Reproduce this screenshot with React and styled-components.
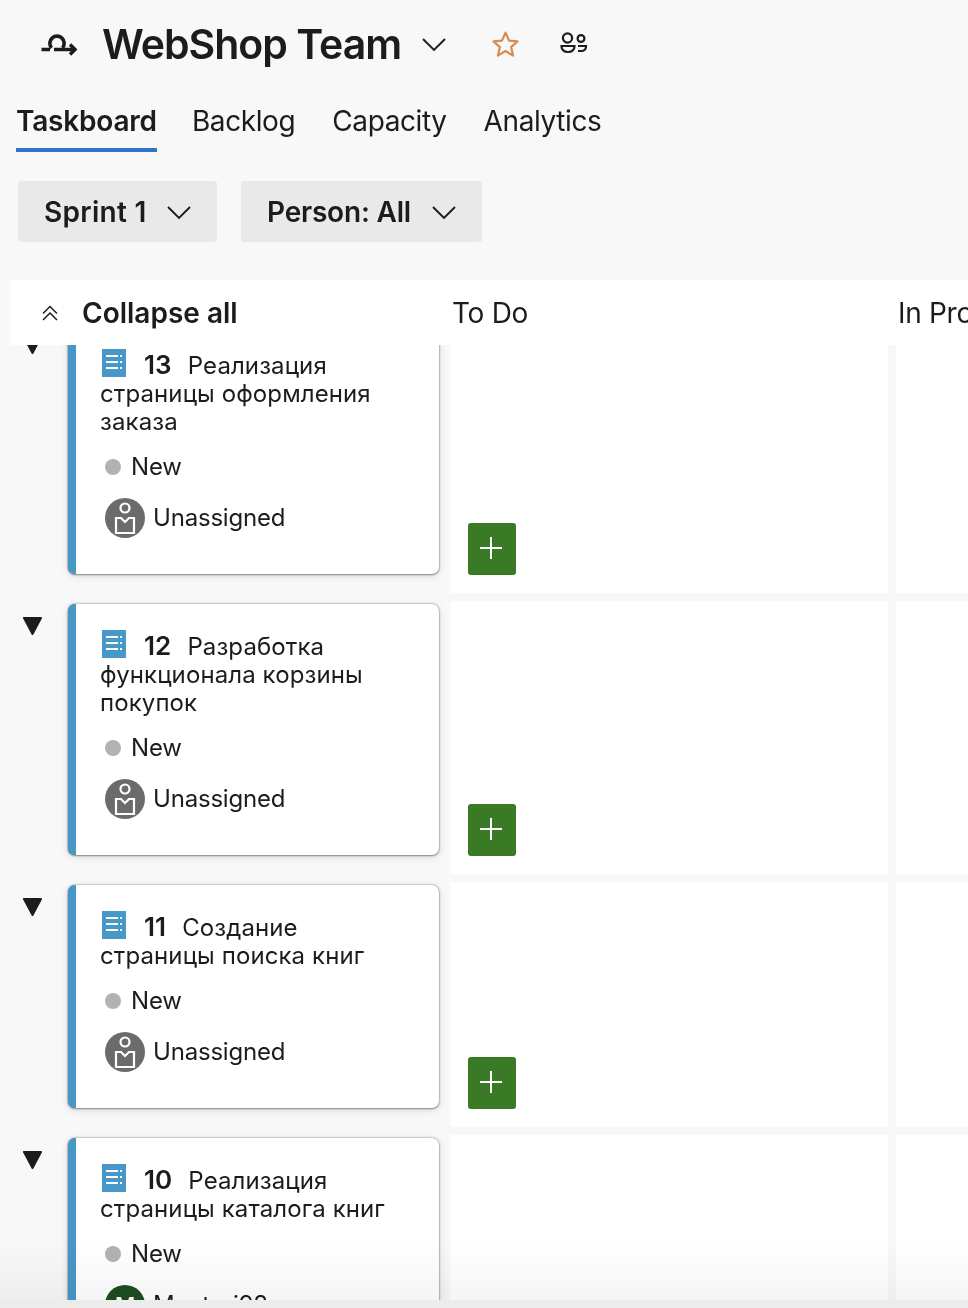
// React
import React from "react";

// Vendor
import styled, { createGlobalStyle } from "styled-components";

const GlobalStyle = createGlobalStyle`
  html,
  body {
    margin: 0;
    padding: 0;
    background: #f8f8f8;
  }

  body {
    font-family: Inter, "Liberation Sans", sans-serif;
    color: #1c1c1c;
    -webkit-font-smoothing: antialiased;
  }
`;

const Page = styled.div`
  width: 968px;
  height: 1308px;
  display: flex;
  flex-direction: column;
  overflow: hidden;
`;

// Title bar
const TitleBar = styled.header`
  height: 88px;
  display: flex;
  align-items: center;
  padding-left: 40px;
  flex: none;
`;

const Title = styled.h1`
  margin: 0 0 0 25px;
  font-size: 41px;
  font-weight: 600;
  letter-spacing: -1px;
  white-space: nowrap;
`;

const TitleChevron = styled.span`
  display: flex;
  margin-left: 20px;
`;

const StarButton = styled.span`
  display: flex;
  margin-left: 44px;
`;

const PeopleButton = styled.span`
  display: flex;
  margin-left: 40px;
`;

// Tabs
const Tabs = styled.nav`
  display: flex;
  gap: 37px;
  padding-left: 16px;
  flex: none;
`;

const Tab = styled.div`
  height: 64px;
  box-sizing: border-box;
  margin-right: ${(p) => (p.$active ? "-2px" : "0")};
  padding-top: 13px;
  font-size: 28px;
  line-height: 40px;
  letter-spacing: ${(p) => (p.$active ? "-0.2px" : "-0.4px")};
  font-weight: ${(p) => (p.$active ? 600 : 400)};
  border-bottom: 4px solid ${(p) => (p.$active ? "#3274c9" : "transparent")};
`;

// Filters
const Filters = styled.div`
  display: flex;
  gap: 24px;
  padding: 29px 0 0 18px;
  flex: none;
`;

const Filter = styled.div`
  width: ${(p) => p.$width}px;
  height: 61px;
  box-sizing: border-box;
  display: flex;
  align-items: center;
  justify-content: space-between;
  padding: 0 25px 0 26px;
  border-radius: 3px;
  background: #e9e9e9;
  font-size: 28px;
  font-weight: 600;
  letter-spacing: ${(p) => p.$tracking}px;
`;

// Board
const Board = styled.section`
  margin: 38px 0 0 10px;
  flex: 1;
  min-height: 0;
  display: flex;
  flex-direction: column;
`;

const BoardHead = styled.div`
  height: 65px;
  flex: none;
  display: grid;
  grid-template-columns: 442px 446px 1fr;
  align-items: center;
  background: #fff;
  font-size: 28px;
  letter-spacing: -0.3px;
  white-space: nowrap;
  overflow: hidden;
`;

const CollapseAll = styled.div`
  display: flex;
  align-items: center;
  gap: 23px;
  padding-left: 31px;
  font-weight: 600;
  letter-spacing: 0;
`;

const Scroller = styled.div`
  position: relative;
  height: 955px;
  flex: none;
  overflow: hidden;
  margin-left: -10px;
`;

// The list is scrolled by 25px, so the first row sits partly under the head
const Rows = styled.div`
  margin-top: -25px;
  display: flex;
  flex-direction: column;
  gap: 8px;
`;

const Row = styled.div`
  display: grid;
  grid-template-columns: 450px 438px 1fr;
`;

const RowHeadCell = styled.div`
  display: flex;
  align-items: flex-start;
  padding: 3px 11px 19px 22px;
`;

const Toggle = styled.span`
  display: flex;
  margin: 12px 25px 0 0;
`;

const Card = styled.article`
  flex: 1;
  min-width: 0;
  box-sizing: border-box;
  padding: 26px 16px 36px 24px;
  background: #fff;
  border-left: 8px solid #4797c9;
  border-radius: 7px;
  box-shadow: 0 0 2px rgba(0, 0, 0, 0.5), 0 1px 2px rgba(0, 0, 0, 0.3), 0 2px 8px rgba(0, 0, 0, 0.12);
`;

const CardTitle = styled.div`
  font-size: 24px;
  line-height: 28px;
  letter-spacing: 0.1px;
`;

const TypeIcon = styled.svg`
  display: inline-block;
  vertical-align: -3px;
  margin: 0 18px 0 2px;
`;

const CardId = styled.b`
  font-size: 26px;
  font-weight: 600;
  margin-right: 16px;
`;

const CardState = styled.div`
  display: flex;
  align-items: center;
  gap: 10px;
  margin: 16px 0 0 5px;
  font-size: 24px;
  line-height: 30px;
  letter-spacing: -0.2px;
`;

const StateDot = styled.span`
  width: 16px;
  height: 16px;
  margin-top: -1px;
  border-radius: 50%;
  background: #b2b2b2;
`;

const CardOwner = styled.div`
  display: flex;
  align-items: center;
  gap: 8px;
  margin: 16px 0 0 5px;
  font-size: 24px;
  line-height: 40px;
  letter-spacing: -0.2px;
`;

const Avatar = styled.span`
  width: 40px;
  height: 40px;
  flex: none;
  display: flex;
  align-items: center;
  justify-content: center;
  border-radius: 50%;
  background: ${(p) => p.$color};
  color: #fff;
  font-size: 22px;
  font-weight: 600;
`;

const Cell = styled.div`
  background: #fff;
  display: flex;
  align-items: flex-end;
  padding: 0 0 18px 18px;
`;

const NextCell = styled.div`
  background: #fff;
  margin-left: 8px;
`;

const AddButton = styled.span`
  width: 48px;
  height: 52px;
  display: flex;
  align-items: center;
  justify-content: center;
  border-radius: 3px;
  background: #3a7a27;
`;

const BottomFade = styled.div`
  position: absolute;
  left: 0;
  right: 0;
  bottom: 0;
  height: 60px;
  background: linear-gradient(#ffffff, #f5f5f5);
  mix-blend-mode: multiply;
  pointer-events: none;
`;

const BottomStrip = styled.div`
  height: 8px;
  flex: none;
  margin-left: -10px;
  background: #ececec;
`;

// Icons
const Chevron = () => (
  <svg width="26" height="26" viewBox="0 0 26 26" fill="none" stroke="#1c1c1c" strokeWidth="1.9">
    <path d="M2 8 13 19 24 8" />
  </svg>
);

const SprintIcon = () => (
  <svg width="37" height="24" viewBox="0 0 37 24" fill="none" stroke="#1c1c1c" strokeWidth="3.6">
    <path d="M11.500 16A7.200 7.200 0 1 1 22.500 16" />
    <path d="M1.500 17.500H10M14 17.500H34" />
    <path d="M30 12.500 35 17.500 30 22.500" strokeWidth="3.400" />
  </svg>
);

const StarIcon = () => (
  <svg width="29" height="29" viewBox="0 0 28 28" fill="none" stroke="#d78b50" strokeWidth="2.100" strokeLinejoin="round">
    <path d="M14 2.500 17.400 10.300 25.600 11 19.400 16.500 21.300 24.700 14 20.300 6.700 24.700 8.600 16.500 2.400 11 10.600 10.300Z" />
  </svg>
);

const PeopleIcon = () => (
  <svg width="28" height="24" viewBox="0 0 28 24" fill="none" stroke="#1c1c1c" strokeWidth="2.200">
    <circle cx="7.500" cy="6" r="4.600" />
    <path d="M1.500 14H14.500V14.500A6 5.500 0 0 1 8.500 20H7.500A6 5.500 0 0 1 1.500 14.500Z" />
    <circle cx="21" cy="6.500" r="3.400" />
    <path d="M18 14H26V14.500A4.500 4.500 0 0 1 21.500 19H18" />
  </svg>
);

const CollapseIcon = () => (
  <svg width="18" height="18" viewBox="0 0 18 18" fill="none" stroke="#1c1c1c" strokeWidth="1.500">
    <path d="M2 9.500 9 2.500 16 9.500M2 16 9 9 16 16" />
  </svg>
);

const ToggleIcon = () => (
  <svg width="21" height="19" viewBox="0 0 21 19" fill="#1c1c1c" stroke="#1c1c1c" strokeWidth="2" strokeLinejoin="round">
    <path d="M2 2H19L10.500 18Z" />
  </svg>
);

const StoryIcon = () => (
  <TypeIcon width="24" height="28" viewBox="0 0 24 28">
    <rect width="24" height="28" fill="#4797c9" />
    <path d="M4 7H16M4 13H16M4 19H16M18 7H20M18 13H20M18 19H20" stroke="#fff" strokeWidth="1.800" />
  </TypeIcon>
);

const UnassignedIcon = () => (
  <svg width="24" height="34" viewBox="0 0 24 34" fill="none" stroke="#fff" strokeWidth="2.200">
    <circle cx="12" cy="7" r="4.500" />
    <path d="M3 17H8L12 21 16 17H21V32H3Z" />
  </svg>
);

const PlusIcon = () => (
  <svg width="24" height="24" viewBox="0 0 24 24" stroke="#fff" strokeWidth="2">
    <path d="M0 11H22M11 0V22" />
  </svg>
);

const items = [
  { id: 13, lines: ["Реализация", "страницы оформления", "заказа"] },
  { id: 12, lines: ["Разработка", "функционала корзины", "покупок"] },
  { id: 11, lines: ["Создание", "страницы поиска книг"] },
  { id: 10, lines: ["Реализация", "страницы каталога книг"], owner: "Mentori98", color: "#1e4d20" },
];

const BoardRow = ({ item }) => {
  const [first, ...rest] = item.lines;
  return (
    <Row>
      <RowHeadCell>
        <Toggle>
          <ToggleIcon />
        </Toggle>
        <Card>
          <CardTitle>
            <StoryIcon />
            <CardId>{item.id}</CardId>
            {first}
            {rest.map((line) => (
              <div key={line}>{line}</div>
            ))}
          </CardTitle>
          <CardState>
            <StateDot />
            New
          </CardState>
          <CardOwner>
            {item.owner ? (
              <Avatar $color={item.color}>M</Avatar>
            ) : (
              <Avatar $color="#6b6b6b">
                <UnassignedIcon />
              </Avatar>
            )}
            {item.owner || "Unassigned"}
          </CardOwner>
        </Card>
      </RowHeadCell>
      <Cell>
        <AddButton>
          <PlusIcon />
        </AddButton>
      </Cell>
      <NextCell />
    </Row>
  );
};

export default function App() {
  return (
    <Page>
      <GlobalStyle />
      <TitleBar>
        <SprintIcon />
        <Title>WebShop Team</Title>
        <TitleChevron>
          <Chevron />
        </TitleChevron>
        <StarButton>
          <StarIcon />
        </StarButton>
        <PeopleButton>
          <PeopleIcon />
        </PeopleButton>
      </TitleBar>
      <Tabs>
        <Tab $active>Taskboard</Tab>
        <Tab>Backlog</Tab>
        <Tab>Capacity</Tab>
        <Tab>Analytics</Tab>
      </Tabs>
      <Filters>
        <Filter $width={199} $tracking={0.3}>
          Sprint 1
          <Chevron />
        </Filter>
        <Filter $width={241} $tracking={-0.2}>
          Person: All
          <Chevron />
        </Filter>
      </Filters>
      <Board>
        <BoardHead>
          <CollapseAll>
            <CollapseIcon />
            Collapse all
          </CollapseAll>
          <div>To Do</div>
          <div>In Progress</div>
        </BoardHead>
        <Scroller>
          <Rows>
            {items.map((item) => (
              <BoardRow key={item.id} item={item} />
            ))}
          </Rows>
          <BottomFade />
        </Scroller>
        <BottomStrip />
      </Board>
    </Page>
  );
}
